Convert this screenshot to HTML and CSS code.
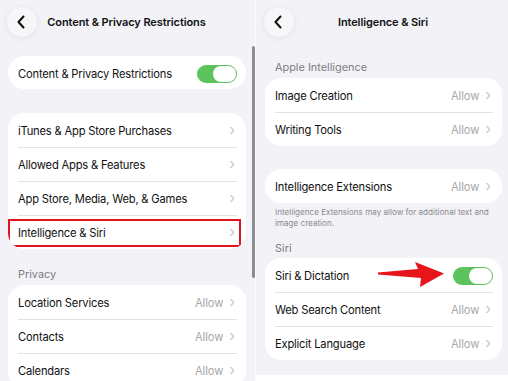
FILE: index.html
```html
<!DOCTYPE html>
<html>
<head>
<meta charset="utf-8">
<link rel="stylesheet" href="styles.css">
</head>
<body>
<div class="screens">
  <section class="panel panel-left">
    <header class="nav">
      <button class="back"><svg width="10" height="14" viewBox="0 0 10 14"><path d="M7.5 1.5 L2.5 7 L7.5 12.5" fill="none" stroke="#111" stroke-width="2" stroke-linecap="round" stroke-linejoin="round"/></svg></button>
      <h1 class="title">Content &amp; Privacy Restrictions</h1>
      <span></span>
    </header>
    <div class="card first-card">
      <div class="row"><div class="row-inner row-short"><span class="label">Content &amp; Privacy Restrictions</span><span class="toggle"><span class="knob"></span></span></div></div>
    </div>
    <div class="card gap-card">
      <div class="row"><div class="row-inner"><span class="label">iTunes &amp; App Store Purchases</span><span class="chev">&#x203A;</span></div></div>
      <div class="row"><div class="row-inner"><span class="label">Allowed Apps &amp; Features</span><span class="chev">&#x203A;</span></div></div>
      <div class="row"><div class="row-inner"><span class="label">App Store, Media, Web, &amp; Games</span><span class="chev">&#x203A;</span></div></div>
      <div class="row highlighted"><div class="row-inner"><span class="label">Intelligence &amp; Siri</span><span class="chev">&#x203A;</span></div></div>
    </div>
    <div class="section-header privacy-header">Privacy</div>
    <div class="card">
      <div class="row"><div class="row-inner"><span class="label">Location Services</span><span class="value">Allow</span><span class="chev">&#x203A;</span></div></div>
      <div class="row"><div class="row-inner"><span class="label">Contacts</span><span class="value">Allow</span><span class="chev">&#x203A;</span></div></div>
      <div class="row"><div class="row-inner"><span class="label">Calendars</span><span class="value">Allow</span><span class="chev">&#x203A;</span></div></div>
    </div>
    <div class="scrollbar"></div>
  </section>
  <div class="divider"></div>
  <section class="panel panel-right">
    <header class="nav">
      <button class="back"><svg width="10" height="14" viewBox="0 0 10 14"><path d="M7.5 1.5 L2.5 7 L7.5 12.5" fill="none" stroke="#111" stroke-width="2" stroke-linecap="round" stroke-linejoin="round"/></svg></button>
      <h1 class="title">Intelligence &amp; Siri</h1>
      <span></span>
    </header>
    <div class="section-header ai-header">Apple Intelligence</div>
    <div class="card">
      <div class="row"><div class="row-inner"><span class="label">Image Creation</span><span class="value">Allow</span><span class="chev">&#x203A;</span></div></div>
      <div class="row"><div class="row-inner"><span class="label">Writing Tools</span><span class="value">Allow</span><span class="chev">&#x203A;</span></div></div>
    </div>
    <div class="card ext-card">
      <div class="row"><div class="row-inner"><span class="label">Intelligence Extensions</span><span class="value">Allow</span><span class="chev">&#x203A;</span></div></div>
    </div>
    <p class="footnote">Intelligence Extensions may allow for additional text and image creation.</p>
    <div class="section-header siri-header">Siri</div>
    <div class="card">
      <div class="row"><div class="row-inner"><span class="label">Siri &amp; Dictation</span><span class="toggle"><span class="knob"></span></span></div></div>
      <div class="row"><div class="row-inner"><span class="label">Web Search Content</span><span class="value">Allow</span><span class="chev">&#x203A;</span></div></div>
      <div class="row"><div class="row-inner"><span class="label">Explicit Language</span><span class="value">Allow</span><span class="chev">&#x203A;</span></div></div>
    </div>
    <div class="bottom-strip"></div>
    <svg class="arrow" width="70" height="30" viewBox="0 0 70 30"><polygon points="0,11.5 40,8 37,1 66,12.5 42,26 43,17 0,13.5" fill="#e8141c"/></svg>
  </section>
</div>
</body>
</html>
```
FILE: styles.css
```css
* { box-sizing: border-box; }
html, body { margin: 0; padding: 0; }
body {
  width: 508px;
  height: 381px;
  overflow: hidden;
  background: #f2f2f7;
  font-family: Inter, "Noto Sans", sans-serif;
  color: #000;
}
.screens {
  display: flex;
  height: 381px;
}
.panel {
  position: relative;
  height: 381px;
  overflow: hidden;
  background: #f2f2f7;
}
.panel-left {
  width: 255px;
  padding: 0 9px 0 8px;
}
.divider {
  width: 1px;
  background: #fbfbfd;
}
.panel-right {
  width: 252px;
  padding: 0 6px 0 9px;
}
.nav {
  display: grid;
  grid-template-columns: 30px 1fr 30px;
  align-items: center;
  height: 46px;
  padding-top: 7px;
  padding-bottom: 9px;
  margin-left: -1px;
}
.back {
  width: 30px;
  height: 30px;
  border-radius: 50%;
  border: none;
  padding: 0;
  background: #f7f7f9;
  box-shadow: 0 1px 6px rgba(0,0,0,0.08);
  display: flex;
  align-items: center;
  justify-content: center;
}
.back svg { margin-left: -2px; }
.title {
  margin: 0;
  font-size: 11px;
  font-weight: 600;
  text-align: center;
  letter-spacing: -0.1px;
  white-space: nowrap;
  color: #111;
}
.card {
  background: #fff;
  border-radius: 16px;
  overflow: hidden;
}
.first-card { margin-top: 10px; }
.gap-card { margin-top: 24px; }
.row {
  padding-left: 10px;
}
.row-inner {
  height: 34px;
  margin-right: 9px;
  display: flex;
  align-items: center;
  border-top: 1px solid #e3e3e6;
  padding-top: 1px;
}
.row:first-child .row-inner { border-top: none; padding-top: 2px; }
.row-inner.row-short { height: 33px; padding-top: 1px; }
.label {
  flex: 1;
  font-size: 11.2px;
  letter-spacing: -0.2px;
  white-space: nowrap;
  color: #111;
}
.value {
  font-size: 11.2px;
  letter-spacing: -0.1px;
  color: #a7a7ac;
  margin-right: 6px;
}
.chev {
  font-size: 15px;
  line-height: 1;
  color: #c8c8cc;
  margin-top: -3px;
  margin-right: 2px;
}
.toggle {
  position: relative;
  width: 40px;
  height: 18px;
  border-radius: 9px;
  background: #5bc45d;
}
.knob {
  position: absolute;
  right: 1px;
  top: 1px;
  width: 23px;
  height: 16px;
  border-radius: 8px;
  background: #fff;
}
.highlighted {
  position: relative;
}
.highlighted::after {
  content: "";
  position: absolute;
  left: 0;
  right: 5px;
  top: 4px;
  bottom: 2px;
  border: 2px solid #e3131d;
}
.section-header {
  font-size: 10.9px;
  line-height: 14px;
  color: #7d7d82;
  padding-left: 10px;
  padding-bottom: 4px;
}
.privacy-header { padding-top: 18px; }
.ai-header { padding-top: 14px; }
.siri-header { padding-top: 12px; padding-bottom: 3px; }
.ext-card { margin-top: 23px; }
.footnote {
  margin: 0;
  padding: 4px 4px 0 10px;
  font-size: 8.1px;
  line-height: 11px;
  color: #8a8a8f;
}
.bottom-strip {
  margin: 15px -6px 0 -9px;
  height: 20px;
  background: #fff;
}
.scrollbar {
  position: absolute;
  left: 252px;
  top: 46px;
  width: 3px;
  height: 232px;
  border-radius: 2px;
  background: #8e8e92;
}
.arrow {
  position: absolute;
  left: 122px;
  top: 261px;
}
```
